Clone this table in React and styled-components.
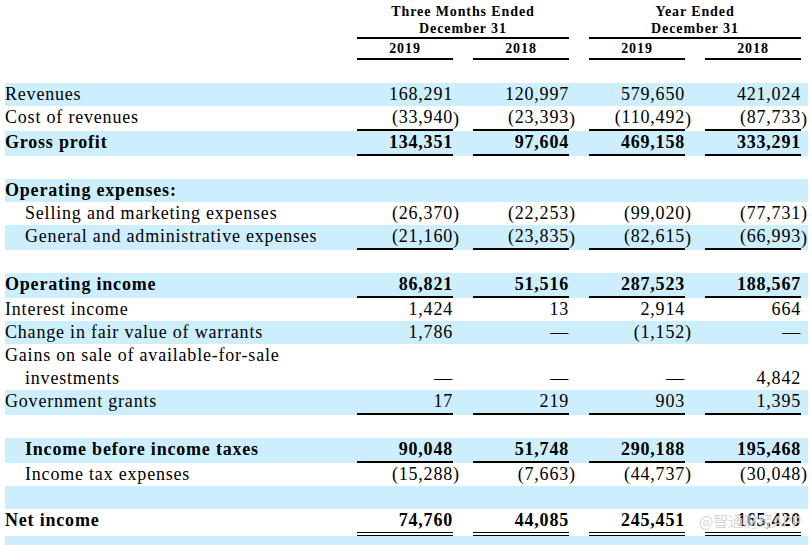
import React from "react";
import styled, { createGlobalStyle } from "styled-components";

const GlobalStyle = createGlobalStyle`
  body {
    margin: 0;
    background: #ffffff;
    font-family: "Liberation Serif", "Times New Roman", serif;
    color: #000000;
  }
`;

const COLS = "352px 96px 20px 96px 20px 96px 20px 96px 7px";
const SHADE = "#cdeefc";

const Page = styled.div`
  position: relative;
  width: 812px;
  height: 545px;
  overflow: hidden;
`;

const Table = styled.div`
  margin-left: 5px;
  padding-top: 3px;
  width: 803px;
`;

const HeadGrid = styled.div`
  display: grid;
  grid-template-columns: ${COLS};
  font-weight: 700;
  font-size: 14px;
  letter-spacing: 0.9px;
`;

const HeadSpacer = styled.div`
  grid-row: 1 / span 2;
`;

const PeriodHead = styled.div`
  grid-column: ${(p) => p.$col} / span 3;
  text-align: center;
  line-height: 17px;
  border-bottom: 2px solid #000;
`;

const YearHead = styled.div`
  grid-row: 2;
  grid-column: ${(p) => p.$col};
  text-align: center;
  line-height: 19px;
  border-bottom: 2px solid #000;
`;

const Row = styled.div`
  display: grid;
  grid-template-columns: ${COLS};
  min-height: 23px;
  background: ${(p) => (p.$shade ? SHADE : "transparent")};
  font-size: 18px;
  line-height: 23px;
  letter-spacing: 0.8px;
  font-weight: ${(p) => (p.$bold ? 700 : 400)};
`;

const Label = styled.div`
  padding-left: ${(p) => (p.$indent ? "20px" : "0")};
  white-space: nowrap;
`;

const HangLabel = styled.div`
  padding-left: 20px;
  text-indent: -20px;
  white-space: nowrap;
`;

const Value = styled.div`
  align-self: end;
  text-align: right;
  white-space: nowrap;
  border-bottom: ${(p) =>
    p.$line === "double"
      ? "4px double #000"
      : p.$line === "single"
      ? "2px solid #000"
      : "none"};
`;

const Paren = styled.div`
  align-self: end;
  white-space: nowrap;
  overflow: visible;
`;

const Watermark = styled.div`
  position: absolute;
  left: 699px;
  top: 510px;
  white-space: nowrap;
  font-family: "Noto Sans CJK SC", "Noto Sans", sans-serif;
  font-size: 15px;
  line-height: 22px;
  color: rgba(200, 200, 200, 0.75);
  text-shadow: 0 0 1px rgba(255, 255, 255, 0.9);
  pointer-events: none;
`;

const rows = [
  { label: "Revenues", shade: true, vals: ["168,291", "120,997", "579,650", "421,024"] },
  { label: "Cost of revenues", line: "single", vals: ["(33,940)", "(23,393)", "(110,492)", "(87,733)"] },
  { label: "Gross profit", bold: true, shade: true, line: "single", vals: ["134,351", "97,604", "469,158", "333,291"] },
  {},
  { label: "Operating expenses:", bold: true, shade: true },
  { label: "Selling and marketing expenses", indent: true, vals: ["(26,370)", "(22,253)", "(99,020)", "(77,731)"] },
  { label: "General and administrative expenses", indent: true, shade: true, line: "single", vals: ["(21,160)", "(23,835)", "(82,615)", "(66,993)"] },
  {},
  { label: "Operating income", bold: true, shade: true, line: "single", vals: ["86,821", "51,516", "287,523", "188,567"] },
  { label: "Interest income", vals: ["1,424", "13", "2,914", "664"] },
  { label: "Change in fair value of warrants", shade: true, vals: ["1,786", "—", "(1,152)", "—"] },
  { label: ["Gains on sale of available-for-sale", "investments"], vals: ["—", "—", "—", "4,842"] },
  { label: "Government grants", shade: true, line: "single", vals: ["17", "219", "903", "1,395"] },
  {},
  { label: "Income before income taxes", bold: true, indent: true, shade: true, line: "single", vals: ["90,048", "51,748", "290,188", "195,468"] },
  { label: "Income tax expenses", indent: true, vals: ["(15,288)", "(7,663)", "(44,737)", "(30,048)"] },
  { shade: true },
  { label: "Net income", bold: true, line: "double", vals: ["74,760", "44,085", "245,451", "165,420"] },
  { shade: true },
];

function Cells({ vals, line }) {
  const cells = [];
  for (let i = 0; i < 4; i++) {
    const v = vals ? vals[i] : "";
    const neg = v && v.endsWith(")");
    cells.push(
      <Value key={"v" + i} $line={vals ? line : undefined}>
        {neg ? v.slice(0, -1) : v}
      </Value>
    );
    cells.push(<Paren key={"p" + i}>{neg ? ")" : ""}</Paren>);
  }
  return cells;
}

export default function App() {
  return (
    <Page>
      <GlobalStyle />
      <Table>
        <HeadGrid>
          <HeadSpacer />
          <PeriodHead $col={2}>
            Three Months Ended
            <br />
            December 31
          </PeriodHead>
          <PeriodHead $col={6}>
            Year Ended
            <br />
            December 31
          </PeriodHead>
          <YearHead $col={2}>2019</YearHead>
          <YearHead $col={4}>2018</YearHead>
          <YearHead $col={6}>2019</YearHead>
          <YearHead $col={8}>2018</YearHead>
        </HeadGrid>
        <Row />
        {rows.map((r, i) => (
          <Row key={i} $shade={r.shade} $bold={r.bold}>
            {Array.isArray(r.label) ? (
              <HangLabel>
                {r.label[0]}
                <br />
                {r.label[1]}
              </HangLabel>
            ) : (
              <Label $indent={r.indent}>{r.label || ""}</Label>
            )}
            <Cells vals={r.vals} line={r.line} />
          </Row>
        ))}
      </Table>
      <Watermark>@智通财经APP</Watermark>
    </Page>
  );
}
